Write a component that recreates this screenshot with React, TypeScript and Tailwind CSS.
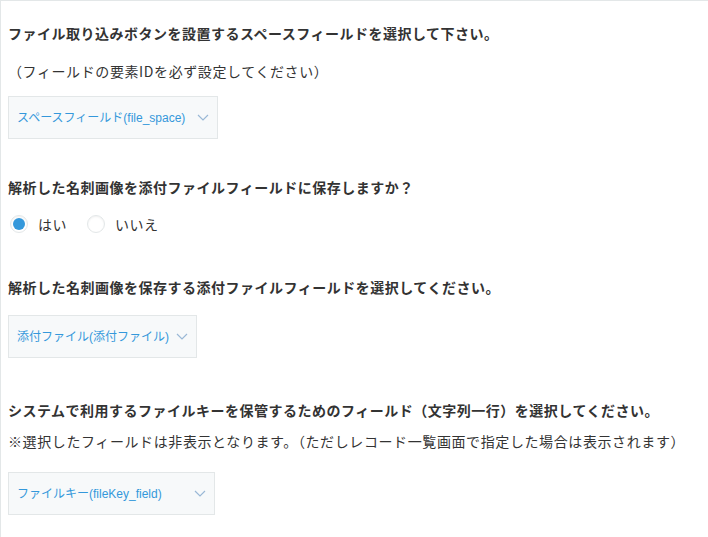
import { useState } from "react";

const font = { fontFamily: '"Noto Sans CJK JP", "Noto Sans", sans-serif' };
const selectFont = { fontFamily: '"Liberation Sans", "Noto Sans CJK JP", sans-serif' };

function Chevron() {
  return (
    <svg width="12" height="7" viewBox="0 0 12 7" fill="none" className="shrink-0">
      <path d="M1 1l5 5 5-5" stroke="#9ab8d6" strokeWidth="1.2" />
    </svg>
  );
}

function Select({ label, width }: { label: string; width: string }) {
  return (
    <div
      className={`flex h-[43px] items-center justify-between whitespace-nowrap border border-[#e3e7e8] bg-[#f7f9fa] pl-2 pr-[8px] text-[12px] tracking-normal text-[#3498db] ${width}`}
      style={selectFont}
    >
      <span>{label}</span>
      <Chevron />
    </div>
  );
}

function Radio({ label, checked, onClick }: { label: string; checked: boolean; onClick: () => void }) {
  return (
    <button type="button" onClick={onClick} className="flex items-center gap-[10px] text-[14px] text-[#333]">
      <span className="flex h-[18px] w-[18px] items-center justify-center rounded-full border border-[#e3e7e8] bg-white shadow-[inset_0_1px_2px_rgba(0,0,0,0.06)]">
        {checked && <span className="h-[12px] w-[12px] rounded-full bg-[#3498db]" />}
      </span>
      <span>{label}</span>
    </button>
  );
}

export default function App() {
  const [save, setSave] = useState(true);

  return (
    <div className="min-h-screen border-l border-t border-[#e3e7e8] bg-white pl-[7px] pt-[22px] leading-5 tracking-[0.5px]" style={font}>
      <h1 className="text-[14px] font-bold text-[#333]">
        ファイル取り込みボタンを設置するスペースフィールドを選択して下さい。
      </h1>
      <p className="mt-[18px] text-[14px] tracking-[0.6px] text-[#333]">（フィールドの要素IDを必ず設定してください）</p>
      <div className="mt-[15px]">
        <Select label="スペースフィールド(file_space)" width="w-[210px]" />
      </div>

      <h2 className="mt-[38px] text-[14px] font-bold text-[#333]">解析した名刺画像を添付ファイルフィールドに保存しますか？</h2>
      <div className="mt-[17px] flex items-center gap-[20px] pl-[2px]">
        <Radio label="はい" checked={save} onClick={() => setSave(true)} />
        <Radio label="いいえ" checked={!save} onClick={() => setSave(false)} />
      </div>

      <h2 className="mt-[43px] text-[14px] font-bold text-[#333]">解析した名刺画像を保存する添付ファイルフィールドを選択してください。</h2>
      <div className="mt-[18px]">
        <Select label="添付ファイル(添付ファイル)" width="w-[189px]" />
      </div>

      <h2 className="mt-[42px] text-[14px] font-bold text-[#333]">
        システムで利用するファイルキーを保管するためのフィールド（文字列一行）を選択してください。
      </h2>
      <p className="mt-[11px] text-[14px] tracking-[0.6px] text-[#333]">
        ※選択したフィールドは非表示となります。（ただしレコード一覧画面で指定した場合は表示されます）
      </p>
      <div className="mt-[21px]">
        <Select label="ファイルキー(fileKey_field)" width="w-[207px]" />
      </div>
    </div>
  );
}
